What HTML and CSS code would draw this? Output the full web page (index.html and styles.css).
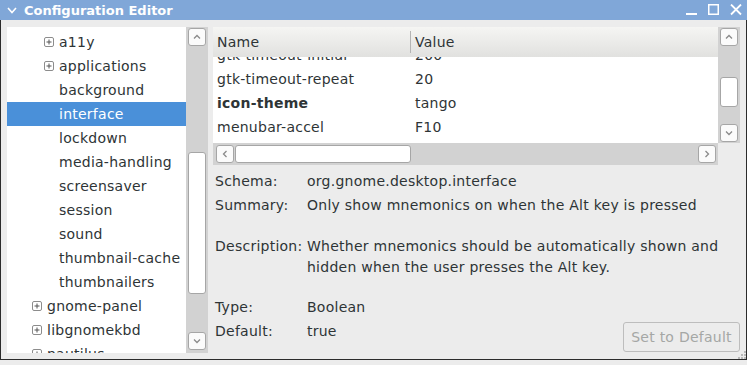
FILE: index.html
```html
<!DOCTYPE HTML>
<html>
	<head>
		<title>Configuration Editor</title>
		<meta name="viewport" content="width=device-width, initial-scale=1.0">
		<link rel="stylesheet" href="styles.css">
	</head>
	<body>
	<div class="window">
		<div class="titlebar">
			<svg class="menu-arrow" width="10" height="7" viewBox="0 0 10 7"><polyline points="1,1 5,5.5 9,1" fill="none" stroke="#fff" stroke-width="1.6"/></svg>
			<span class="title">Configuration Editor</span>
			<div class="controls">
				<svg width="11" height="12" viewBox="0 0 11 12"><rect x="0" y="9" width="11" height="2" fill="#fff"/></svg>
				<svg width="11" height="12" viewBox="0 0 11 12"><rect x="0.75" y="0.75" width="9.5" height="9.5" fill="none" stroke="#fff" stroke-width="1.5"/></svg>
				<svg width="12" height="12" viewBox="0 0 12 12"><path d="M1 0.5 L11 10.5 M11 0.5 L1 10.5" stroke="#fff" stroke-width="1.8"/></svg>
			</div>
		</div>
		<div class="content">
			<div class="tree-pane">
				<div class="tree">
					<div class="row child"><svg class="exp" width="10" height="10" viewBox="0 0 10 10"><rect x="0.5" y="0.5" width="9" height="9" rx="1.5" fill="#fff" stroke="#8c8c8c"/><path d="M2.5 5 H7.5 M5 2.5 V7.5" stroke="#555"/></svg>a11y</div>
					<div class="row child"><svg class="exp" width="10" height="10" viewBox="0 0 10 10"><rect x="0.5" y="0.5" width="9" height="9" rx="1.5" fill="#fff" stroke="#8c8c8c"/><path d="M2.5 5 H7.5 M5 2.5 V7.5" stroke="#555"/></svg>applications</div>
					<div class="row leaf">background</div>
					<div class="row leaf selected">interface</div>
					<div class="row leaf">lockdown</div>
					<div class="row leaf">media-handling</div>
					<div class="row leaf">screensaver</div>
					<div class="row leaf">session</div>
					<div class="row leaf">sound</div>
					<div class="row leaf">thumbnail-cache</div>
					<div class="row leaf">thumbnailers</div>
					<div class="row top"><svg class="exp" width="10" height="10" viewBox="0 0 10 10"><rect x="0.5" y="0.5" width="9" height="9" rx="1.5" fill="#fff" stroke="#8c8c8c"/><path d="M2.5 5 H7.5 M5 2.5 V7.5" stroke="#555"/></svg>gnome-panel</div>
					<div class="row top"><svg class="exp" width="10" height="10" viewBox="0 0 10 10"><rect x="0.5" y="0.5" width="9" height="9" rx="1.5" fill="#fff" stroke="#8c8c8c"/><path d="M2.5 5 H7.5 M5 2.5 V7.5" stroke="#555"/></svg>libgnomekbd</div>
					<div class="row top"><svg class="exp" width="10" height="10" viewBox="0 0 10 10"><rect x="0.5" y="0.5" width="9" height="9" rx="1.5" fill="#fff" stroke="#8c8c8c"/><path d="M2.5 5 H7.5 M5 2.5 V7.5" stroke="#555"/></svg>nautilus</div>
				</div>
				<div class="vscroll tree-scroll">
					<div class="sbtn"><svg width="8" height="6" viewBox="0 0 8 6"><polyline points="1,4.5 4,1.5 7,4.5" fill="none" stroke="#8a8a8a" stroke-width="1.3"/></svg></div>
					<div class="thumb"></div>
					<div class="sbtn down"><svg width="8" height="6" viewBox="0 0 8 6"><polyline points="1,1.5 4,4.5 7,1.5" fill="none" stroke="#8a8a8a" stroke-width="1.3"/></svg></div>
				</div>
			</div>
			<div class="main-pane">
				<div class="list-box">
					<div class="list">
						<div class="list-head">
							<div class="col-name">Name</div>
							<div class="col-value">Value</div>
						</div>
						<div class="list-body">
							<div class="list-rows">
								<div class="lrow"><span class="col-name">gtk-timeout-initial</span><span class="col-value">200</span></div>
								<div class="lrow"><span class="col-name">gtk-timeout-repeat</span><span class="col-value">20</span></div>
								<div class="lrow"><span class="col-name bold">icon-theme</span><span class="col-value">tango</span></div>
								<div class="lrow"><span class="col-name">menubar-accel</span><span class="col-value">F10</span></div>
							</div>
						</div>
					</div>
					<div class="vscroll list-scroll">
						<div class="sbtn"><svg width="8" height="6" viewBox="0 0 8 6"><polyline points="1,4.5 4,1.5 7,4.5" fill="none" stroke="#8a8a8a" stroke-width="1.3"/></svg></div>
						<div class="thumb"></div>
						<div class="sbtn down"><svg width="8" height="6" viewBox="0 0 8 6"><polyline points="1,1.5 4,4.5 7,1.5" fill="none" stroke="#8a8a8a" stroke-width="1.3"/></svg></div>
					</div>
				</div>
				<div class="hscroll-row">
					<div class="hscroll">
						<div class="sbtn"><svg width="6" height="8" viewBox="0 0 6 8"><polyline points="4.5,1 1.5,4 4.5,7" fill="none" stroke="#8a8a8a" stroke-width="1.3"/></svg></div>
						<div class="hthumb"></div>
						<div class="sbtn right"><svg width="6" height="8" viewBox="0 0 6 8"><polyline points="1.5,1 4.5,4 1.5,7" fill="none" stroke="#8a8a8a" stroke-width="1.3"/></svg></div>
					</div>
				</div>
				<div class="details">
					<div class="drow"><span class="label">Schema:</span><span>org.gnome.desktop.interface</span></div>
					<div class="drow"><span class="label">Summary:</span><span>Only show mnemonics on when the Alt key is pressed</span></div>
					<div class="drow desc"><span class="label">Description:</span><span>Whether mnemonics should be automatically shown and<br>hidden when the user presses the Alt key.</span></div>
					<div class="footer">
						<div>
							<div class="drow"><span class="label">Type:</span><span>Boolean</span></div>
							<div class="drow"><span class="label">Default:</span><span>true</span></div>
						</div>
						<button disabled>Set to Default</button>
					</div>
				</div>
			</div>
			<svg class="grip" width="8" height="8" viewBox="0 0 8 8">
				<rect x="6" y="0" width="2" height="2" fill="#b8b8b8"/>
				<rect x="3" y="3" width="2" height="2" fill="#b8b8b8"/><rect x="6" y="3" width="2" height="2" fill="#b8b8b8"/>
				<rect x="0" y="6" width="2" height="2" fill="#b8b8b8"/><rect x="3" y="6" width="2" height="2" fill="#b8b8b8"/><rect x="6" y="6" width="2" height="2" fill="#b8b8b8"/>
			</svg>
		</div>
	</div>
	</body>
</html>
```

FILE: styles.css
```css
html, body{
	margin: 0;
	padding: 0;
}

body{
	background: #ececec;
	font-family: "DejaVu Sans", sans-serif;
	font-size: 14px;
	letter-spacing: 0.25px;
	color: #2e3436;
	overflow: hidden;
}

.window{
	width: 747px;
	height: 360px;
	display: flex;
	flex-direction: column;
}

.titlebar{
	height: 20px;
	flex: none;
	background: #80a7d8;
	display: flex;
	align-items: center;
	color: #fff;
	letter-spacing: 0;
}

.menu-arrow{
	margin: 1px 0 0 7px;
}

.title{
	margin-left: 7px;
	font-weight: bold;
	font-size: 13px;
}

.controls{
	margin-left: auto;
	margin-right: 5px;
	display: flex;
	gap: 11px;
}

.content{
	position: relative;
	flex: 1;
	display: flex;
	gap: 5px;
	padding: 7px 6px 6px 6px;
	border: 1px solid #2b2b2b;
	border-top: none;
	overflow: hidden;
}

.tree-pane{
	width: 201px;
	flex: none;
	display: flex;
}

.tree{
	width: 179px;
	background: #fff;
	padding-top: 3px;
	overflow: hidden;
}

.row{
	height: 24px;
	line-height: 24px;
	display: flex;
	align-items: center;
	white-space: nowrap;
}

.row.child{
	padding-left: 37px;
}

.row.leaf{
	padding-left: 52px;
}

.row.top{
	padding-left: 25px;
}

.row.selected{
	background: #4a90d9;
	color: #fff;
}

.exp{
	margin-right: 5px;
	flex: none;
}

.vscroll{
	width: 22px;
	flex: none;
	background: #d2d2d2;
	display: flex;
	flex-direction: column;
	align-items: center;
	box-sizing: border-box;
	padding: 1px 0 3px 0;
}

.sbtn{
	width: 18px;
	height: 18px;
	box-sizing: border-box;
	border: 1px solid #a6a6a6;
	border-radius: 3px;
	background: #fbfbfb;
	display: flex;
	align-items: center;
	justify-content: center;
	flex: none;
}

.vscroll .down{
	margin-top: auto;
}

.thumb{
	width: 18px;
	box-sizing: border-box;
	border: 1px solid #a6a6a6;
	border-radius: 3px;
	background: #fff;
}

.tree-scroll .thumb{
	margin-top: 106px;
	height: 142px;
}

.main-pane{
	width: 527px;
	flex: none;
	display: flex;
	flex-direction: column;
}

.list-box{
	height: 116px;
	display: flex;
	flex: none;
}

.list{
	width: 505px;
	display: flex;
	flex-direction: column;
}

.list-head{
	height: 30px;
	flex: none;
	background: linear-gradient(#f5f5f3, #e1e1df);
	display: flex;
	align-items: center;
	position: relative;
	z-index: 1;
}

.col-name{
	width: 193px;
	padding-left: 4px;
	flex: none;
}

.col-value{
	padding-left: 4px;
}

.list-head .col-value{
	border-left: 1px solid #b4b4b4;
	height: 22px;
	line-height: 22px;
}

.list-body{
	flex: 1;
	background: #fff;
	overflow: hidden;
}

.list-rows{
	margin-top: -14px;
}

.lrow{
	height: 24px;
	line-height: 24px;
	display: flex;
	white-space: nowrap;
}

.lrow .col-value{
	padding-left: 5px;
}

.bold{
	font-weight: bold;
}

.list-scroll{
	padding-bottom: 1px;
}

.list-scroll .thumb{
	margin-top: 31px;
	height: 30px;
}

.hscroll-row{
	height: 22px;
	flex: none;
	display: flex;
}

.hscroll{
	width: 505px;
	background: #d2d2d2;
	display: flex;
	align-items: center;
	box-sizing: border-box;
	padding: 0 2px 0 3px;
}

.hthumb{
	width: 176px;
	height: 18px;
	margin-left: 1px;
	box-sizing: border-box;
	border: 1px solid #a6a6a6;
	border-radius: 3px;
	background: #fff;
}

.hscroll .right{
	margin-left: auto;
}

.details{
	padding: 4px 0 0 2px;
}

.drow{
	display: flex;
	height: 24px;
	line-height: 24px;
	white-space: nowrap;
}

.label{
	width: 92px;
	flex: none;
}

.drow.desc{
	height: 42px;
	line-height: 21px;
	margin: 19px 0 17px 0;
}

.footer{
	display: flex;
	justify-content: space-between;
	align-items: flex-start;
}

button{
	margin-top: 27px;
	width: 117px;
	height: 30px;
	font-family: "DejaVu Sans", sans-serif;
	font-size: 14px;
	letter-spacing: 0.25px;
	color: #a5a7a5;
	background: #ececec;
	border: 1px solid #bdbdbd;
	border-radius: 3px;
	padding: 0;
}

.grip{
	position: absolute;
	right: 0;
	bottom: 0;
}
```
